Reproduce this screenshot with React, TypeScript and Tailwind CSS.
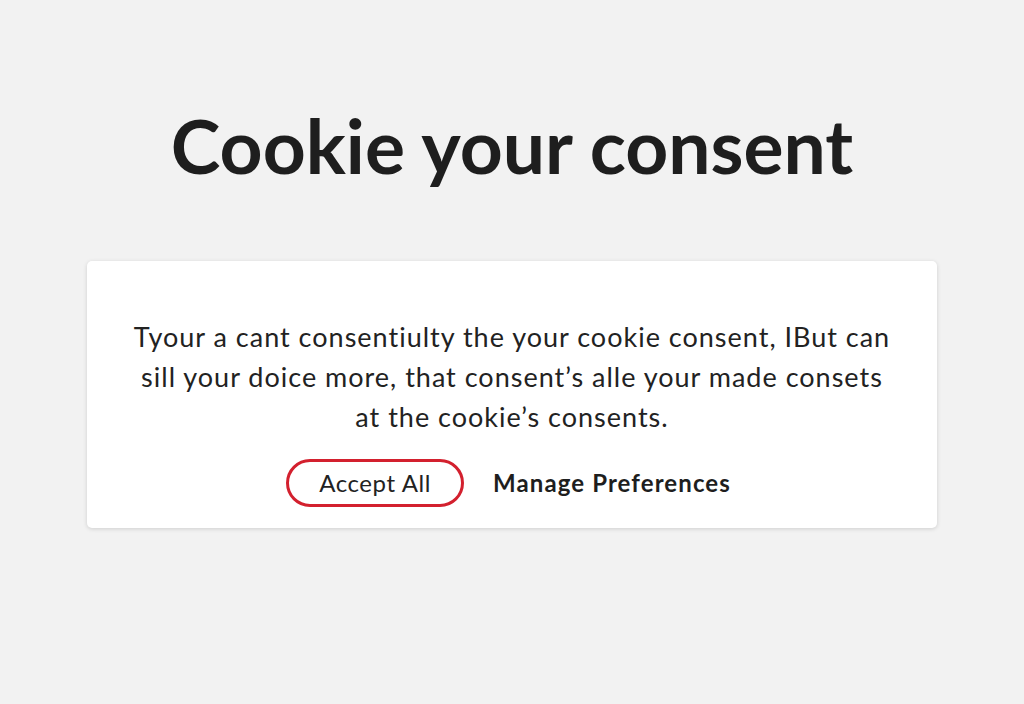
import React from "react";

export default function App() {
  return (
    <div
      className="w-[1024px] h-[704px] bg-[#f2f2f2] flex flex-col items-center"
      style={{ fontFamily: "Lato, 'Noto Sans', sans-serif" }}
    >
      <h1 className="mt-[100px] text-[75px] leading-[90px] font-bold text-[#1e1e1e]">
        Cookie your consent
      </h1>
      <div className="mt-[71px] w-[850px] h-[267px] bg-white rounded-[5px] shadow-[0_1px_4px_rgba(0,0,0,0.15)] flex flex-col items-center pt-[56px]">
        <p className="text-[27px] leading-[40px] tracking-[1px] text-[#222] text-center whitespace-nowrap">
          Tyour a cant consentiulty the your cookie consent, IBut can
          <br />
          sill your doice more, that consent’s alle your made consets
          <br />
          at the cookie’s consents.
        </p>
        <div className="mt-[22px] mr-[7px] flex items-center gap-[29px]">
          <button className="w-[178px] h-[48px] rounded-full border-[3px] border-[#d3202e] text-[24px] tracking-[0.6px] text-[#222] flex items-center justify-center">
            Accept All
          </button>
          <button className="text-[24px] tracking-[1.1px] font-bold text-[#1e1e1e]">Manage Preferences</button>
        </div>
      </div>
    </div>
  );
}
